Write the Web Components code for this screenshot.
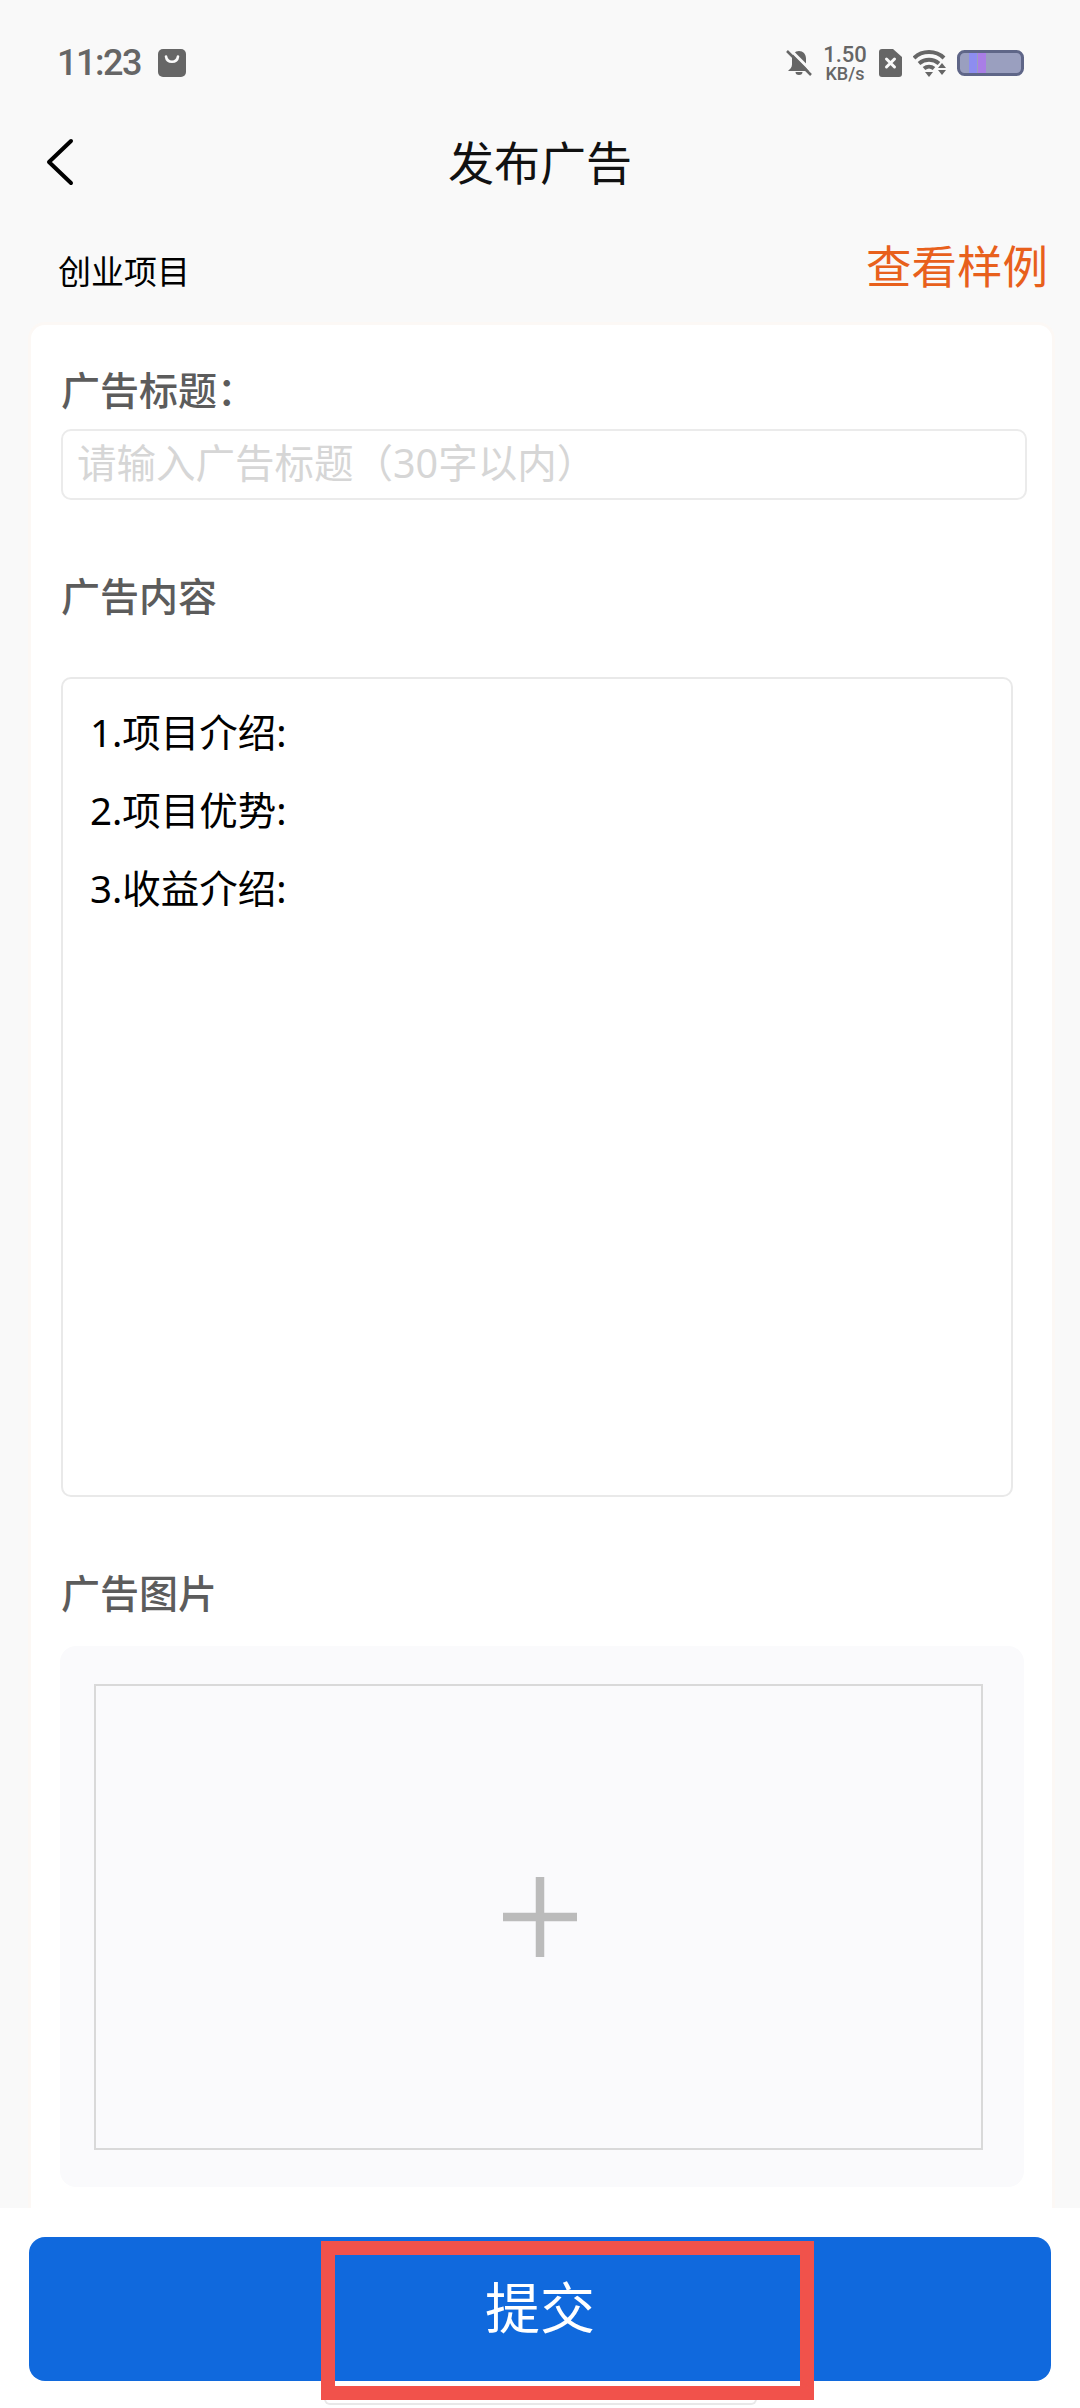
<!DOCTYPE html>
<html lang="zh">
<head>
<meta charset="utf-8">
<title>发布广告</title>
<style>
  html, body { margin: 0; height: 2408px; overflow: hidden; background: #f9f9f9; }
  body { font-family: "Noto Sans", "Noto Sans CJK SC", sans-serif; }
</style>
</head>
<body>
<ad-page></ad-page>
<script>
class StatusBar extends HTMLElement {
  constructor() {
    super();
    this.attachShadow({ mode: 'open' }).innerHTML = `
      <style>
        :host { display: flex; align-items: center; height: 126px; padding: 0 57px; box-sizing: border-box; color: #666; }
        .time { font: 500 36px/1 Roboto, sans-serif; letter-spacing: -1.5px; }
        .bag { margin-left: 17px; }
        .right { margin-left: auto; margin-right: -1px; display: flex; align-items: center; }
        .speed { width: 44px; margin: 0 12px 0 10px; text-align: center; font-family: Roboto, sans-serif; font-weight: 500; }
        .speed div:first-child { font-size: 22px; line-height: 22px; }
        .speed div:last-child { font-size: 18px; line-height: 16px; white-space: nowrap; }
        svg { display: block; }
      </style>
      <span class="time">11:23</span>
      <svg class="bag" width="28" height="28" viewBox="0 0 28 28">
        <rect width="28" height="28" rx="5" fill="#666"/>
        <path d="M8 7.500c1 7 11 7 12 0" fill="none" stroke="#fafafa" stroke-width="2.600" stroke-linecap="round"/>
      </svg>
      <div class="right">
        <svg width="28" height="28" viewBox="0 0 28 28">
          <path d="M14 2c-4 0-7 3-7 7.500v6c0 3-2 4.500-4 6.500h21c-2-2-3-3.500-3-6.500v-6C21 5 18 2 14 2z" fill="#666"/>
          <path d="M10.500 23a3.500 3 0 0 0 7 0z" fill="#666"/>
          <path d="M4.500 0l24 24" stroke="#f9f9f9" stroke-width="3"/>
          <path d="M2 2l24 24" stroke="#666" stroke-width="2.500"/>
        </svg>
        <div class="speed"><div>1.50</div><div>KB/s</div></div>
        <svg width="23" height="28" viewBox="0 0 23 28">
          <path d="M3 0h11l9 8v17a3 3 0 0 1-3 3H3a3 3 0 0 1-3-3V3a3 3 0 0 1 3-3z" fill="#666"/>
          <path d="M7.500 10l8 8M15.500 10l-8 8" stroke="#fafafa" stroke-width="3" stroke-linecap="round"/>
        </svg>
        <svg style="margin-left:11px" width="34" height="28" viewBox="0 0 34 28">
          <path d="M1 9c8-8 22-8 30 0" fill="none" stroke="#666" stroke-width="4"/>
          <path d="M6 14.500c6-5 14-5 20 0" fill="none" stroke="#666" stroke-width="4"/>
          <path d="M11 19.500c3-2.500 7-2.500 10 0" fill="none" stroke="#666" stroke-width="4"/>
          <path d="M12 23h8l-4 5z" fill="#666"/>
          <path d="M29 14l4 5h-8zM25 21h8l-4 5z" fill="#666"/>
        </svg>
        <svg style="margin-left:10px" width="67" height="26" viewBox="0 0 67 26">
          <rect x="1.500" y="1.500" width="64" height="23" rx="6" fill="#9a9fbf" stroke="#5f6688" stroke-width="3"/>
          <rect x="12" y="3" width="8" height="20" fill="#8d8df0"/>
          <rect x="21" y="3" width="8" height="20" fill="#a97ee6"/>
        </svg>
      </div>`;
  }
}

class NavBar extends HTMLElement {
  constructor() {
    super();
    this.attachShadow({ mode: 'open' }).innerHTML = `
      <style>
        :host { display: block; position: relative; height: 72px; text-align: center; }
        .title { font-size: 46px; line-height: 72px; color: #111; }
        .back { position: absolute; left: 45px; top: 12px; }
      </style>
      <svg class="back" width="30" height="48" viewBox="0 0 30 48">
        <path d="M26 3L4 24l22 21" fill="none" stroke="#000" stroke-width="4" stroke-linecap="round" stroke-linejoin="round"/>
      </svg>
      <div class="title"><slot></slot></div>`;
  }
}

class CategoryRow extends HTMLElement {
  constructor() {
    super();
    this.attachShadow({ mode: 'open' }).innerHTML = `
      <style>
        :host { display: flex; justify-content: space-between; height: 127px; padding: 0 32px 0 58px; box-sizing: border-box; }
        .name { margin-top: 57px; font-size: 33px; line-height: 34px; color: #000; }
        .sample { margin-top: 45px; font-size: 45.500px; line-height: 46px; color: #e8601c; }
      </style>
      <div class="name"><slot name="name"></slot></div>
      <div class="sample"><slot name="sample"></slot></div>`;
  }
}

class FormField extends HTMLElement {
  constructor() {
    super();
    this.attachShadow({ mode: 'open' }).innerHTML = `
      <style>
        :host { display: block; }
        .label { font-size: 39px; font-weight: 500; line-height: 40px; color: #5c5c5c; }
        .body { display: block; margin-top: var(--gap, 20px); }
      </style>
      <div class="label"><slot name="label"></slot></div>
      <div class="body"><slot></slot></div>`;
  }
}

class TitleInput extends HTMLElement {
  constructor() {
    super();
    this.attachShadow({ mode: 'open' }).innerHTML = `
      <style>
        :host { display: block; width: 966px; height: 71px; box-sizing: border-box; padding-left: 14px; border: 2px solid #ebebeb; border-radius: 10px; font-size: 39.500px; line-height: 65px; color: #d6d6d6; }
      </style>
      <slot></slot>`;
  }
}

class ContentBox extends HTMLElement {
  constructor() {
    super();
    this.attachShadow({ mode: 'open' }).innerHTML = `
      <style>
        :host { display: block; width: 952px; height: 820px; box-sizing: border-box; padding: 14px 0 0 27px; border: 2px solid #e9e9e9; border-radius: 10px; font-size: 38.500px; line-height: 78px; color: #000; }
      </style>
      <slot></slot>`;
  }
}

class ImagePicker extends HTMLElement {
  constructor() {
    super();
    this.attachShadow({ mode: 'open' }).innerHTML = `
      <style>
        :host { display: block; width: 964px; height: 541px; margin-left: -1px; box-sizing: border-box; padding: 38px 41px 37px 34px; background: #fafafc; border-radius: 16px; }
        .frame { display: flex; align-items: center; justify-content: center; height: 100%; box-sizing: border-box; padding-left: 3px; border: 2px solid #d9d9d9; }
        svg { display: block; }
      </style>
      <div class="frame">
        <svg width="74" height="80" viewBox="0 0 74 80">
          <path d="M0 40h74M37 0v80" stroke="#bbb" stroke-width="8.500"/>
        </svg>
      </div>`;
  }
}

class SubmitBar extends HTMLElement {
  constructor() {
    super();
    this.attachShadow({ mode: 'open' }).innerHTML = `
      <style>
        :host { display: block; position: relative; height: 200px; box-sizing: border-box; padding: 29px 29px 0; background: #fff; }
        .btn { height: 144px; border-radius: 16px; background: #1069dd; color: #fff; font-size: 55px; line-height: 139px; text-align: center; }
        .mark { position: absolute; left: 321px; top: 33px; width: 493px; height: 159px; box-sizing: border-box; border: 14px solid #f1524b; }
        .home { position: absolute; left: 324px; bottom: 3px; width: 433px; height: 10px; box-sizing: border-box; border: 2px solid #e8e8e8; border-top: 0; border-radius: 0 0 6px 6px; }
      </style>
      <div class="btn"><slot></slot></div>
      <div class="home"></div>
      <div class="mark"></div>`;
  }
}

const pageTemplate = document.createElement('template');
pageTemplate.innerHTML = `
  <style>
    :host { display: flex; flex-direction: column; height: 2408px; }
    main { flex: 1; min-height: 0; overflow: hidden; padding-top: 3px; }
    category-row { margin-bottom: -3px; }
    .card { margin: 0 28px 0 31px; padding: 45px 25px 60px 30px; background: #fff; border-radius: 14px 14px 0 0; box-shadow: 0 0 0 3px #fcf8f5; }
    .second { margin-top: 76px; --gap: 61px; }
    .third { margin-top: 76px; --gap: 33px; }
    .first { --gap: 19px; }
    p { margin: 0; }
  </style>
  <status-bar></status-bar>
  <nav-bar>发布广告</nav-bar>
  <category-row>
    <span slot="name">创业项目</span>
    <span slot="sample">查看样例</span>
  </category-row>
  <main>
    <div class="card">
      <form-field class="first">
        <span slot="label">广告标题：</span>
        <title-input>请输入广告标题（30字以内）</title-input>
      </form-field>
      <form-field class="second">
        <span slot="label">广告内容</span>
        <content-box>
          <p>1.项目介绍:</p>
          <p>2.项目优势:</p>
          <p>3.收益介绍:</p>
        </content-box>
      </form-field>
      <form-field class="third">
        <span slot="label">广告图片</span>
        <image-picker></image-picker>
      </form-field>
    </div>
  </main>
  <submit-bar>提交</submit-bar>
`;

class AdPage extends HTMLElement {
  constructor() {
    super();
    this.attachShadow({ mode: 'open' }).appendChild(pageTemplate.content.cloneNode(true));
  }
}

customElements.define('status-bar', StatusBar);
customElements.define('nav-bar', NavBar);
customElements.define('category-row', CategoryRow);
customElements.define('form-field', FormField);
customElements.define('title-input', TitleInput);
customElements.define('content-box', ContentBox);
customElements.define('image-picker', ImagePicker);
customElements.define('submit-bar', SubmitBar);
customElements.define('ad-page', AdPage);
</script>
</body>
</html>
